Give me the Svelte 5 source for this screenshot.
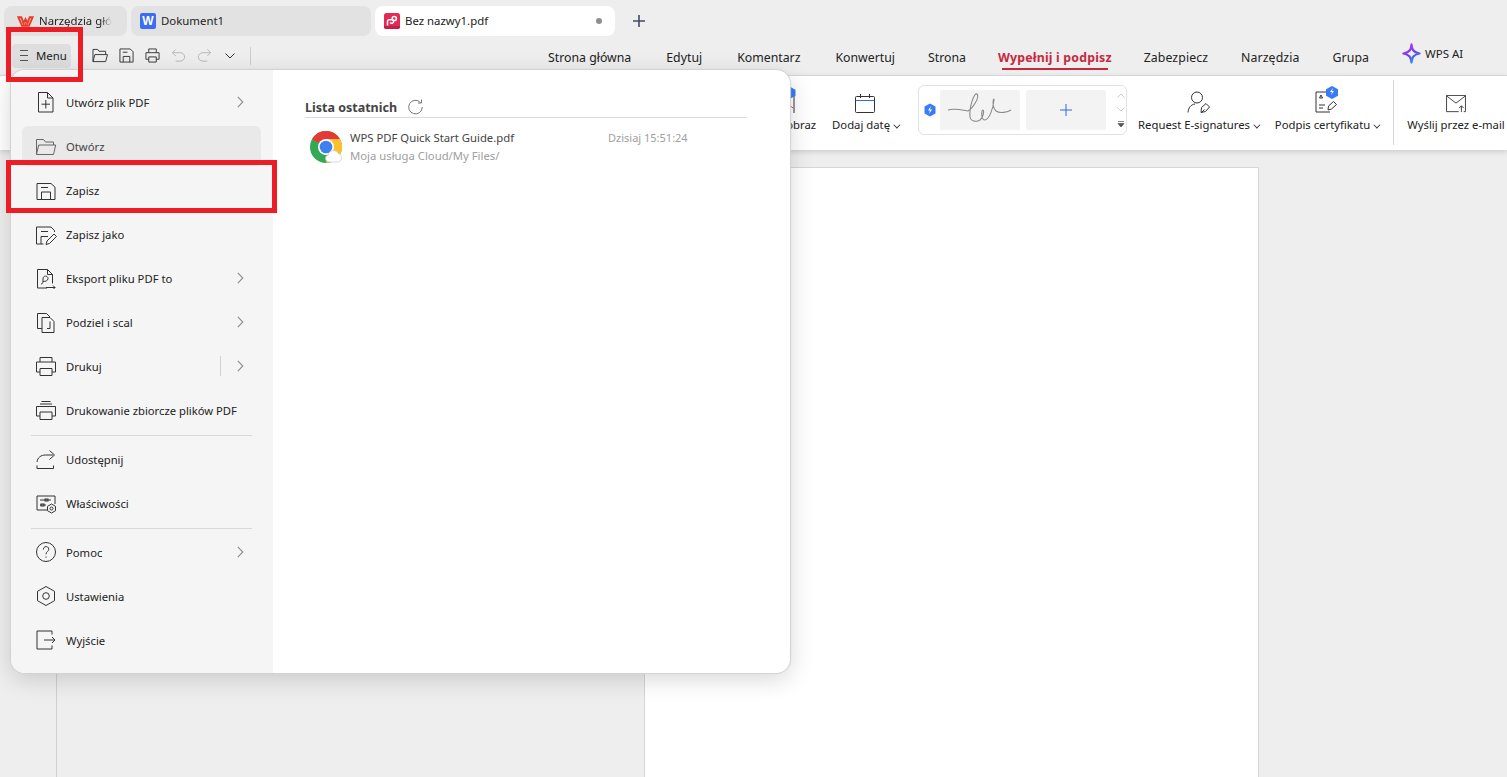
<script>
  const tabsNav = ['Strona główna', 'Edytuj', 'Komentarz', 'Konwertuj', 'Strona', 'Wypełnij i podpisz', 'Zabezpiecz', 'Narzędzia', 'Grupa'];

  const icons = {
    create: '<path d="M3.500 1.500h9l5.500 5.500v14h-14.500z"/><path d="M12.500 1.500v5.500h5.500"/><path d="M10.800 9v8.500M6.500 13.200h8.500"/>',
    open: '<path d="M1.500 19.500v-15h7l2 2.500h8v3"/><path d="M1.500 19.500l2.200-9.500h17l-2.200 9.500z"/>',
    save: '<path d="M2 4.500h14l4 3.600v12.400h-18z"/><path d="M6 8.500h7"/><path d="M6.500 20.500v-7.500h9v7.500"/>',
    saveas: '<path d="M19.500 9v-1.500l-3.500-3.500h-14.500v17h7"/><path d="M6 8.500h7M6 21v-7.500h7"/><path d="M11 21.500l1-3.500 7-7 2.500 2.500-7 7z"/>',
    exportpdf: '<path d="M12 21h-9.500v-18.500h10l5 5v9"/><path d="M12.500 2.500v5h5"/><path d="M6 17c2 0 2-2 2-5 0-4 5-3.500 5-.5 0 2.500-3 3-5 3"/><path d="M11 20.500h9M18 18.500l2 2-2 2"/>',
    split: '<path d="M7 17.500h-4.500v-15h9l3.500 3.500"/><path d="M7 6.500h8l4 4v11h-12z"/><path d="M15 10.500v7h-3"/>',
    print: '<path d="M5 7v-4.500h12v4.500"/><path d="M5 17h-3.500v-10h19v10h-3.500"/><path d="M5 13.500h12v7h-12z"/>',
    batch: '<path d="M6.500 2.500h9M5 5h12"/><path d="M5 7.500h12"/><path d="M5 17h-3.500v-9.500h19v9.500h-3.500"/><path d="M5 13h12v7.500h-12z"/>',
    share: '<path d="M2 14c.5-4.500 4-7 8.500-7h7.500"/><path d="M14.500 2.500l5 4.500-5 4.500"/><path d="M2 17.500v3h16.500v-3"/>',
    props: '<path d="M12 18h-10v-14h18v8"/><path d="M5 8h11M5 13h6"/><rect x="10" y="7" width="3" height="2"/><rect x="6" y="12" width="3" height="2"/><path d="M16.500 12l4 2.300v4.400l-4 2.300-4-2.300v-4.400z"/><circle cx="16.500" cy="16.500" r="1.500"/>',
    help: '<circle cx="11" cy="11" r="9.500"/><path d="M8.300 8.500c.2-4 5.500-3.700 5.500-.3 0 2.300-2.800 2.300-2.800 5"/><path d="M11 15.500v1.200"/>',
    settings: '<path d="M11 1.500l8.500 4.800v9.400l-8.500 4.800-8.500-4.800v-9.400z"/><circle cx="11" cy="11" r="3.300"/>',
    exit: '<path d="M17 5.500v-3.500h-15v18h15v-3.500"/><path d="M9 11h11M17 8l3 3-3 3"/>'
  };

  const menuGroups = [
    [
      { label: 'Utwórz plik PDF', icon: 'create', more: true },
      { label: 'Otwórz', icon: 'open', active: true },
      { label: 'Zapisz', icon: 'save' },
      { label: 'Zapisz jako', icon: 'saveas' },
      { label: 'Eksport pliku PDF to', icon: 'exportpdf', more: true },
      { label: 'Podziel i scal', icon: 'split', more: true },
      { label: 'Drukuj', icon: 'print', more: true, split: true },
      { label: 'Drukowanie zbiorcze plików PDF', icon: 'batch' }
    ],
    [
      { label: 'Udostępnij', icon: 'share' },
      { label: 'Właściwości', icon: 'props' }
    ],
    [
      { label: 'Pomoc', icon: 'help', more: true },
      { label: 'Ustawienia', icon: 'settings' },
      { label: 'Wyjście', icon: 'exit' }
    ]
  ];
</script>

<div class="app">
  <div class="tabbar">
    <div class="tab home">
      <svg class="tab-ico" viewBox="0 0 17 11" width="17" height="11"><path d="M1.300 1.200h3l2.200 6 2-4 2 4 2.200-6h3l-3.800 8.600h-2.600l-.8-1.600-.8 1.600h-2.600z" fill="none" stroke="#ee3a24" stroke-width="1.900" stroke-linejoin="miter"/></svg>
      <span class="fade-label">Narzędzia głó</span>
    </div>
    <div class="tab doc">
      <span class="word-ico">W</span>
      <span>Dokument1</span>
    </div>
    <div class="tab pdf">
      <svg class="tab-ico" viewBox="0 0 16 16" width="16" height="16"><rect width="16" height="16" rx="2.500" fill="#e32a55"/><path d="M0 13h16v.5a2.500 2.500 0 0 1-2.500 2.500h-11a2.500 2.500 0 0 1-2.500-2.500z" fill="#c41f49"/><path d="M3.500 12.500v-4a1.800 1.800 0 0 1 1.800-1.800h2.500a1.800 1.800 0 1 1-1.600 2.600" fill="none" stroke="#fff" stroke-width="1.500"/><circle cx="10.300" cy="5.500" r="2.100" fill="none" stroke="#fff" stroke-width="1.500"/></svg>
      <span class="pdf-name">Bez nazwy1.pdf</span>
      <i class="dot"></i>
    </div>
    <svg class="add" viewBox="0 0 12 12" width="12" height="12"><path d="M6 0v12M0 6h12" stroke="#444a66" stroke-width="1.600"/></svg>
  </div>

  <div class="toolbar">
    <button class="menu-btn">
      <svg viewBox="0 0 10 11" width="10" height="11"><path d="M1 .5h8M1 5.500h8M1 10.500h8" stroke="#555" stroke-width="1"/></svg>
      Menu
    </button>
    <div class="quick">
      <svg viewBox="0 0 17 16" width="16" height="15"><path d="M1 14.500v-13h5l1.500 2h7v3M1 14.500l2-7.500h13.500l-2 7.500z"/></svg>
      <svg viewBox="0 0 16 16" width="15" height="15"><path d="M1 1h11l3 3v11h-14zM4 4.500h5M4.500 15v-6h7v6"/></svg>
      <svg viewBox="0 0 16 16" width="15" height="15"><path d="M4 5v-4h8v4M4 12h-3v-7h14v7h-3M4 9.500h8v5.500h-8z"/></svg>
      <svg class="off" viewBox="0 0 16 16" width="15" height="15"><path d="M5 1.500l-3.500 3.500 3.500 3.500M1.500 5h8.500a4.500 4.500 0 0 1 0 9h-5"/></svg>
      <svg class="off" viewBox="0 0 16 16" width="15" height="15"><path d="M11 1.500l3.500 3.500-3.500 3.500M14.500 5h-8.500a4.500 4.500 0 0 0 0 9h5"/></svg>
      <svg class="chev-down" viewBox="0 0 10 6" width="10" height="6"><path d="M.5 .5l4.500 4.500 4.500-4.500"/></svg>
      <i class="qsep"></i>
    </div>
    <nav class="nav">
      {#each tabsNav as t, i}
        <span class="nav-item" class:current={i === 5}>{t}</span>
      {/each}
      <span class="ai">
        <svg viewBox="0 0 20 22" width="19" height="21">
          <defs><linearGradient id="aig" x1=".2" y1="0" x2=".7" y2="1"><stop offset="0" stop-color="#c03cf0"/><stop offset=".5" stop-color="#6a3df0"/><stop offset="1" stop-color="#2f9bf5"/></linearGradient></defs>
          <path d="M10 1.500c.5 6 2 8 8.500 9.500-6.500 1.500-8 3.500-8.500 9.500-.5-6-2-8-8.500-9.500 6.500-1.500 8-3.500 8.500-9.500z" fill="none" stroke="url(#aig)" stroke-width="2.400" stroke-linejoin="round"/>
        </svg>
        WPS AI
      </span>
    </nav>
  </div>

  <div class="ribbon">
    <div class="tool image-tool">
      <svg viewBox="0 0 30 26" width="30" height="26" fill="none"><path d="M25 26v-21h-20v21" stroke="#333"/><path d="M10 10l14 11" stroke="#c8452e"/><path d="M21.500 0l5 2.800v6l-5 2.800-5-2.800v-6z" fill="#3a7cf5"/></svg>
      <span>Dodaj obraz</span>
    </div>
    <div class="tool date-tool">
      <svg viewBox="0 0 20 19" width="20" height="19" fill="none" stroke="#333"><rect x=".5" y="2.500" width="19" height="16" rx="1"/><path d="M1 6.500h18" stroke="#2a6fe0"/><path d="M5.500 0v4M14.500 0v4"/></svg>
      <span>Dodaj datę <b class="caret"></b></span>
    </div>
    <div class="signbox">
      <svg class="hex" viewBox="0 0 14 14" width="14" height="14"><path d="M7 .5l5.500 3v7l-5.500 3-5.500-3v-7z" fill="#3a7cf5"/><path d="M8 3l-3 4.500h2l-1 3.500 3-4.500h-2z" fill="#fff"/></svg>
      <div class="thumb">
        <svg viewBox="0 0 80 40" width="80" height="40" fill="none"><path d="M8 20c6-2 14 0 20 1 5-3 12-14 9-17-3-2-8 14-7 23 1 5 7 5 10 3 4-3 4-10 3-10-2 0-2 10 2 10 4-1 8-10 9-20 0-4-3 6 2 11 4 3 12 1 15-1" stroke="#8a8a8a" stroke-width="1.100"/></svg>
      </div>
      <div class="thumb plus">
        <svg viewBox="0 0 12 12" width="12" height="12"><path d="M6 0v12M0 6h12" stroke="#2a6fe0" stroke-width="1"/></svg>
      </div>
      <div class="scroll">
        <svg viewBox="0 0 8 5" width="8" height="5"><path d="M.5 4.500l3.500-3.500 3.500 3.500" fill="none" stroke="#ccc"/></svg>
        <svg viewBox="0 0 8 5" width="8" height="5"><path d="M.5 .5l3.500 3.500 3.500-3.500" fill="none" stroke="#ccc"/></svg>
        <svg viewBox="0 0 8 7" width="8" height="7"><path d="M1 .5h6M1 2.500h6l-3 3.500z" fill="#555" stroke="#555" stroke-width=".7"/></svg>
      </div>
    </div>
    <div class="tool sig-tool">
      <svg viewBox="0 0 23 22" width="23" height="22" fill="none" stroke="#333"><circle cx="10" cy="6.500" r="5.500"/><path d="M1 21.500c.5-5 3-8 7-8.500"/><path d="M14 21.500l.5-5 4.500-4 3.500 3.500-4 4.500z"/><path d="M14.500 21.500l3-3"/></svg>
      <span>Request E-signatures <b class="caret"></b></span>
    </div>
    <div class="tool cert-tool">
      <svg viewBox="0 0 24 27" width="24" height="27" fill="none" stroke="#333"><path d="M11 6h-10v20h14"/><path d="M4 19h6M4 22h4"/><path d="M6 9l1.500 3h-3z"/><path d="M13 24l.5-4 5-4.500 3 3-5 4.500z"/><path d="M17 0l6 3.200v6.600l-6 3.200-6-3.200v-6.600z" fill="#3a7cf5" stroke="none"/><path d="M18 2l-3 4h2l-1 3 3-4h-2z" fill="#fff" stroke="none"/></svg>
      <span>Podpis certyfikatu <b class="caret"></b></span>
    </div>
    <i class="rsep"></i>
    <div class="tool mail-tool">
      <svg viewBox="0 0 24 20" width="22" height="18" fill="none" stroke="#333"><path d="M15 18.500h-13.500v-18h21v18h-2"/><path d="M1.500 1l10.500 8 10.500-8"/><path d="M18 19v-7M15.500 14.500l2.500-2.500 2.500 2.500"/></svg>
      <span>Wyślij przez e-mail</span>
    </div>
  </div>

  <div class="workspace">
    <div class="rail"></div>
    <div class="pages"><div class="page"></div></div>
  </div>

  <div class="menu-panel">
    <div class="menu-left">
      {#each menuGroups as group, g}
        {#if g > 0}<div class="msep"><i></i></div>{/if}
        {#each group as item}
          <div class="mrow" class:active={item.active}>
            <svg class="mico" viewBox="0 0 22 22" width="22" height="22" fill="none" stroke="#333" stroke-width="1">{@html icons[item.icon]}</svg>
            <span class="mlabel">{item.label}</span>
            {#if item.split}<i class="vsep"></i>{/if}
            {#if item.more}
              <svg class="chev" viewBox="0 0 7 12" width="7" height="12"><path d="M.8 .8l5 5.200-5 5.200" fill="none" stroke="#8b8b8b" stroke-width="1.100"/></svg>
            {/if}
          </div>
        {/each}
      {/each}
    </div>
    <div class="menu-right">
      <div class="recent-head">
        <span>Lista ostatnich</span>
        <svg viewBox="0 0 16 16" width="16" height="16" fill="none" stroke="#777"><path d="M13.500 3.500a6.800 6.800 0 1 0 1.800 4.500"/><path d="M14.500 .5v3.500h-3.500"/></svg>
      </div>
      <div class="recent-row">
        <svg class="chrome" viewBox="0 0 32 32" width="32" height="32">
          <circle cx="16" cy="16" r="16" fill="#34a853"/>
          <path d="M29.860 8a16 16 0 0 1-13.860 24l6.930-12 .07-8-7-4z" fill="#fbc02d"/>
          <path d="M2.140 8a16 16 0 0 1 27.720 0h-13.860l-6.930 4z" fill="#e53935"/>
          <circle cx="16" cy="16" r="8" fill="#fff"/>
          <circle cx="16" cy="16" r="6.300" fill="#3b82f0"/>
          <path d="M19 31a3.500 3.500 0 0 1-.8-6.900 5.500 5.500 0 0 1 10.300-1.600 4.500 4.500 0 0 1 .2 8.500z" fill="#fff" stroke="#c8c8c8" stroke-width=".7"/>
        </svg>
        <div class="recent-text">
          <span class="fname">WPS PDF Quick Start Guide.pdf</span>
          <span class="fpath">Moja usługa Cloud/My Files/</span>
        </div>
        <span class="ftime">Dzisiaj 15:51:24</span>
      </div>
    </div>
  </div>

  <div class="mark mark-menu"></div>
  <div class="mark mark-save"></div>
</div>

<style>
  :global(body) {
    margin: 0;
    background: #eeeeee;
    overflow: hidden;
  }
  .app {
    position: relative;
    width: 1507px;
    height: 777px;
    overflow: hidden;
    background: #eeeeee;
    font-family: "Noto Sans", "Open Sans", sans-serif;
    font-size: 12px;
    color: #222;
    display: flex;
    flex-direction: column;
  }
  i, b { display: block; font-style: normal; }

  .tabbar {
    height: 30px;
    padding: 6px 0 0 4px;
    display: flex;
    gap: 4px;
    align-items: stretch;
    flex: none;
    font-size: 11.400px;
    line-height: 28px;
  }
  .tab {
    background: #e2e2e2;
    border-radius: 8px;
    display: flex;
    align-items: center;
    gap: 5px;
    padding-left: 9px;
    box-sizing: border-box;
  }
  .tab.home { width: 123px; padding-left: 13px; }
  .tab.doc { width: 240px; }
  .tab.pdf { width: 240px; background: #fff; position: relative; }
  .fade-label {
    white-space: nowrap;
    -webkit-mask-image: linear-gradient(90deg, #000 84%, transparent);
    mask-image: linear-gradient(90deg, #000 84%, transparent);
  }
  .word-ico {
    width: 16px;
    height: 16px;
    border-radius: 2px;
    background: #3c6cf0;
    color: #fff;
    font: 700 12px/16px "Liberation Sans", sans-serif;
    text-align: center;
  }
  .pdf-name { flex: 1; }
  .dot {
    width: 6px;
    height: 6px;
    border-radius: 50%;
    background: #8f8f8f;
    margin-right: 13px;
  }
  .add { align-self: center; margin-left: 14px; }

  .toolbar {
    height: 39px;
    flex: none;
    display: flex;
    align-items: center;
    padding-left: 12px;
    box-sizing: border-box;
  }
  .menu-btn {
    width: 59px;
    height: 24px;
    border: 0;
    border-radius: 4px;
    background: #dedede;
    display: flex;
    align-items: center;
    gap: 7px;
    padding: 0 0 0 7px;
    font: inherit;
    font-size: 11.400px;
    color: #222;
    flex: none;
  }
  .quick {
    display: flex;
    align-items: center;
    gap: 11px;
    margin-left: 21px;
    flex: none;
  }
  .quick svg { fill: none; stroke: #333; }
  .quick svg.off { stroke: #b5b5b5; }
  .chev-down { margin-left: 2px; }
  .qsep { width: 1px; height: 18px; background: #ccc; margin-left: 4px; }
  .nav {
    display: flex;
    align-items: center;
    gap: 32px;
    margin-left: 297px;
    white-space: nowrap;
    font-size: 12.300px;
    height: 39px;
    padding-top: 3px;
    box-sizing: border-box;
  }
  .nav-item { position: relative; }
  .nav-item:nth-child(-n+3) { margin-right: 3px; }
  .nav-item:nth-child(4) { margin-right: 1px; }
  .nav-item:nth-child(n+7) { margin-right: 1px; letter-spacing: .1px; }
  .nav-item.current { color: #c7283d; font-weight: 700; letter-spacing: .2px; }
  .nav-item.current::after {
    content: "";
    position: absolute;
    left: 4px;
    right: 4px;
    bottom: -4px;
    height: 2px;
    background: #c7283d;
  }
  .ai {
    display: flex;
    align-items: center;
    gap: 4px;
    font-size: 11.500px;
    margin-top: -7px;
  }

  .ribbon {
    height: 75px;
    flex: none;
    background: #fff;
    border-top: 1px solid #d6d6d6;
    box-shadow: 0 2px 5px rgba(0, 0, 0, .14);
    box-sizing: border-box;
    display: flex;
    align-items: stretch;
    padding-left: 750px;
    position: relative;
    white-space: nowrap;
    font-size: 11.300px;
  }
  .tool {
    display: flex;
    flex-direction: column;
    align-items: center;
    justify-content: flex-end;
    padding-bottom: 18px;
    gap: 4px;
  }
  .image-tool { width: 68px; }
  .date-tool { width: 68px; margin-left: 13px; }
  .caret {
    display: inline-block;
    width: 4px;
    height: 4px;
    border: solid #333;
    border-width: 0 1px 1px 0;
    transform: rotate(45deg) translateY(-2px);
  }
  .signbox {
    width: 209px;
    height: 50px;
    margin: 9px 0 0 19px;
    box-sizing: border-box;
    border: 1px solid #e2e2e2;
    border-radius: 6px;
    display: flex;
    align-items: center;
    padding-left: 4px;
  }
  .hex { margin-right: 3px; }
  .thumb {
    width: 80px;
    height: 40px;
    background: #f3f3f3;
    border-radius: 2px;
    margin-right: 6px;
  }
  .thumb.plus { display: flex; align-items: center; justify-content: center; }
  .scroll {
    display: flex;
    flex-direction: column;
    align-items: center;
    gap: 9px;
    margin-left: 5px;
  }
  .sig-tool { width: 120px; margin-left: 11px; }
  .cert-tool { width: 105px; margin-left: 16px; }
  .rsep { width: 1px; background: #d8d8d8; margin: 4px 0 5px 14px; }
  .mail-tool { width: 98px; margin-left: 13px; }

  .workspace {
    flex: 1;
    display: flex;
    min-height: 0;
  }
  .rail { width: 57px; border-right: 1px solid #d0d0d0; box-sizing: border-box; }
  .pages { flex: 1; padding: 17px 0 0 587px; }
  .page {
    width: 615px;
    height: 700px;
    background: #fff;
    border: 1px solid #d6d6d6;
    box-sizing: border-box;
  }

  .menu-panel {
    position: absolute;
    left: 11px;
    top: 70px;
    width: 779px;
    height: 603px;
    border-radius: 14px;
    background: #fff;
    display: flex;
    overflow: hidden;
    box-shadow: 0 0 1px 1px #d2d2d2, 0 6px 24px rgba(0, 0, 0, .16);
  }
  .menu-left {
    width: 262px;
    background: #f5f5f5;
    box-sizing: border-box;
    padding: 10px 12px 0 11px;
    flex: none;
    display: flex;
    flex-direction: column;
  }
  .mrow {
    height: 40px;
    margin: 2px 0;
    border-radius: 6px;
    display: flex;
    align-items: center;
    padding-left: 13px;
    gap: 9px;
    color: #222;
    flex: none;
  }
  .mrow.active { background: #e9e9e9; color: #444; }
  .mrow.active .mico { stroke: #666; }
  .mico { flex: none; }
  .mlabel { flex: 1; font-size: 11.250px; white-space: nowrap; }
  .chev { margin-right: 17px; flex: none; }
  .vsep { width: 1px; height: 20px; background: #d0d0d0; margin-right: 7px; }
  .msep { height: 5px; padding: 0 9px 0 9px; flex: none; }
  .msep i { height: 1px; background: #d8d8d8; margin-top: 3px; }

  .menu-right {
    flex: 1;
    padding: 27px 43px 0 32px;
    box-sizing: border-box;
  }
  .recent-head {
    display: flex;
    align-items: center;
    gap: 10px;
    height: 20px;
    border-bottom: 1px solid #dcdcdc;
    font-weight: 700;
    color: #444;
    font-size: 12.500px;
  }
  .recent-row {
    display: flex;
    align-items: flex-start;
    padding: 12px 0 0 5px;
  }
  .chrome { flex: none; margin-top: 1px; }
  .recent-text {
    width: 258px;
    margin-left: 8px;
    display: flex;
    flex-direction: column;
    gap: 2px;
    line-height: 16px;
    font-size: 11.300px;
  }
  .fname { color: #444; }
  .fpath { color: #a0a0a0; }
  .ftime { color: #a0a0a0; font-size: 11px; line-height: 16px; }

  .mark {
    position: absolute;
    box-sizing: border-box;
    border: 5px solid #ee1c25;
    pointer-events: none;
  }
  .mark-menu { left: 6px; top: 27px; width: 77px; height: 55px; }
  .mark-save { left: 6px; top: 160px; width: 271px; height: 53px; }
</style>
